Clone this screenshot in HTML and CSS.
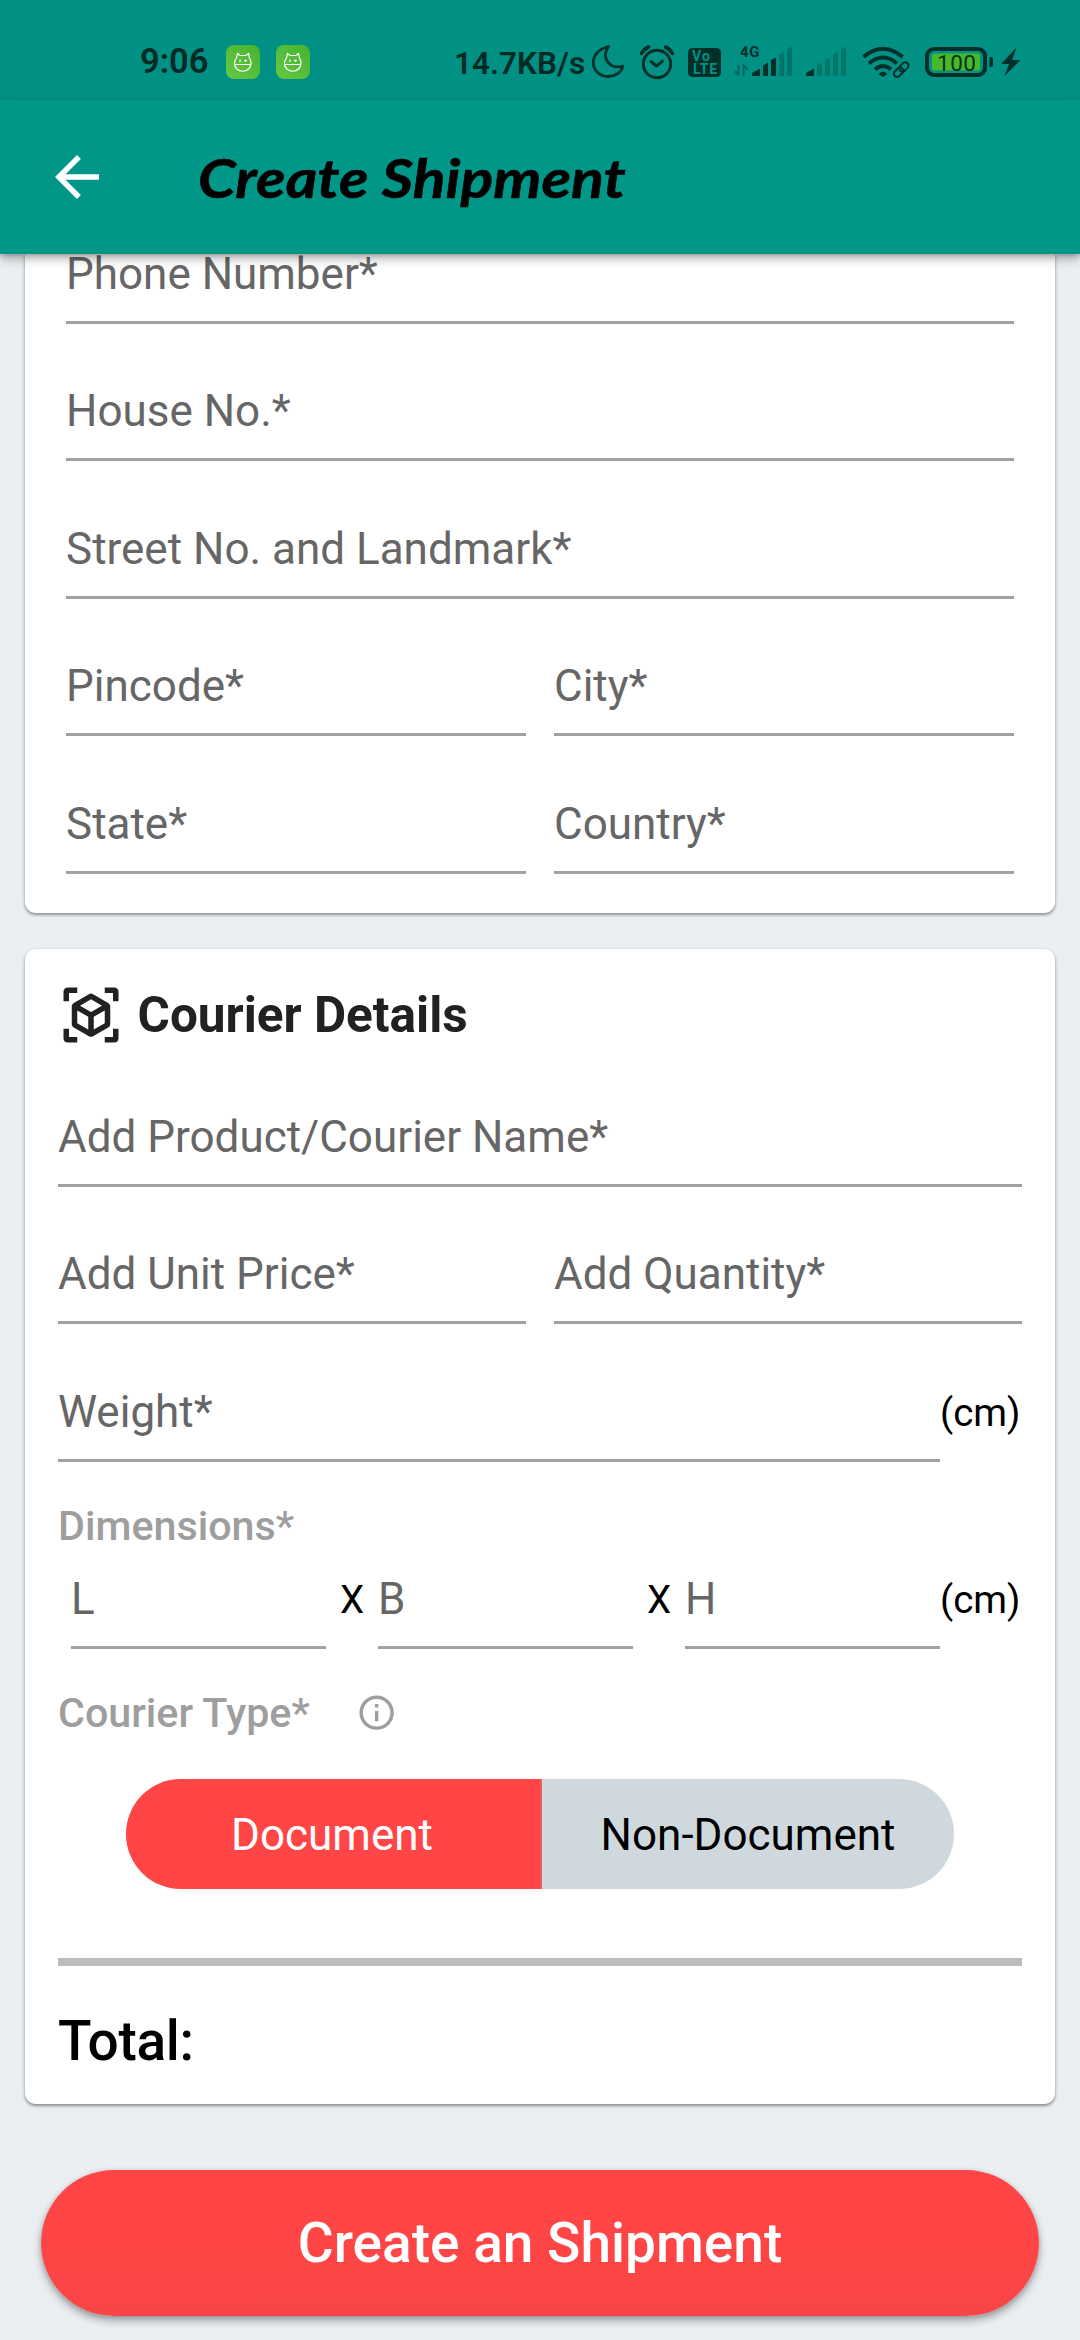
FILE: index.html
```html
<!DOCTYPE html>
<html lang="en">
<head>
<meta charset="utf-8">
<title>Create Shipment</title>
<link rel="stylesheet" href="styles.css">
</head>
<body>
<div class="status-bar">
  <span class="clock">9:06</span>
  <svg class="notif" viewBox="0 0 34 34"><use href="#cat"/></svg>
  <svg class="notif" viewBox="0 0 34 34"><use href="#cat"/></svg>
  <span class="speed">14.7KB/s</span>
  <svg class="sys" width="46" height="100" viewBox="588 0 46 100" fill="none" stroke="#003029" stroke-width="2.8" stroke-linejoin="round"><path d="M608.5 46.5C598 49 593.300 56 593.300 62.500C593.300 70.500 600 76.500 608 76.500C615.500 76.500 621.500 72.500 622.800 66C610 70 600.500 58 608.500 46.500Z"/></svg>
  <svg class="sys" width="48" height="100" viewBox="634 0 48 100" fill="none" stroke="#003029" stroke-width="3" stroke-linecap="round" stroke-linejoin="round"><circle cx="657" cy="64" r="13.700"/><path d="M651 61.500L656.500 66L662.500 61.200"/><path stroke-width="3.600" d="M641.500 53.500Q644 49 648.500 47M665.500 47Q670 49 672.500 53.500"/></svg>
  <svg class="sys" width="48" height="100" viewBox="682 0 48 100"><rect x="688" y="48" width="33" height="29" rx="4.500" fill="#003029"/><g fill="#009184" font-family="Roboto, sans-serif" font-weight="700"><text x="692" y="61" font-size="14" textLength="18">Vo</text><text x="693" y="73.500" font-size="14" textLength="24">LTE</text></g></svg>
  <svg class="sys" width="70" height="100" viewBox="730 0 70 100"><text x="740" y="57" font-family="Roboto, sans-serif" font-size="15" font-weight="700" fill="#003029" textLength="19.500">4G</text><path d="M738.500 65V75M739 75.500L735 71M743.500 76V65.500L748 70" stroke="#00665b" stroke-width="2" fill="none"/><g fill="#003029"><path d="M752 76V73L760 68.500V76Z"/><path d="M763 76V65.500L768 62.500V76Z"/><path d="M771 76V60L776 57.500V76Z"/></g><g fill="#00766a"><path d="M779 76V54.500L784 51.500V76Z"/><path d="M787 76V49.500L792 46.500V76Z"/></g></svg>
  <svg class="sys" width="56" height="100" viewBox="800 0 56 100"><path d="M806 76V73L814 68.500V76Z" fill="#003029"/><g fill="#00766a"><path d="M817 76V65.500L822 62.500V76Z"/><path d="M825 76V60L830 57.500V76Z"/><path d="M833 76V54.500L838 51.500V76Z"/><path d="M841 76V49.500L846 46.500V76Z"/></g></svg>
  <svg class="sys" width="62" height="100" viewBox="856 0 62 100" fill="none" stroke="#003029" stroke-width="4"><path d="M863.500 57Q883 40.500 902.500 57M869 63.500Q883 51.500 897 63.500M875 69.500Q883 62.500 891 69.500"/><path d="M878.500 74Q883 69 887.500 74L883 77Z" fill="#003029" stroke="none"/><g stroke-width="2" transform="rotate(-45 901 69.500)"><rect x="892" y="66.500" width="10.500" height="6.500" rx="3.200"/><rect x="899.500" y="66.500" width="10.500" height="6.500" rx="3.200"/></g></svg>
  <svg class="sys" width="76" height="100" viewBox="918 0 76 100"><rect x="927" y="49" width="58" height="26" rx="7" fill="none" stroke="#003029" stroke-width="4"/><rect x="932" y="53.500" width="48" height="17" rx="2.500" fill="#45b82c"/><path d="M989.500 57h1.500a2 2 0 0 1 2 2v6a2 2 0 0 1-2 2h-1.500z" fill="#003029"/><text x="937" y="70.800" font-family="Roboto, sans-serif" font-size="22.500" fill="#06301a" textLength="39">100</text></svg>
  <svg class="sys" width="36" height="100" viewBox="994 0 36 100"><path d="M1016.500 47.500L1001 64H1009L1004.500 76L1020.500 60H1012Z" fill="#003029"/></svg>
</div>

<header class="app-bar">
  <svg class="back" viewBox="0 0 24 24"><path fill="#fff" d="M20 11H7.830l5.590-5.590L12 4l-8 8 8 8 1.410-1.410L7.830 13H20v-2z"/></svg>
  <h1 class="title">Create Shipment</h1>
</header>

<main class="content">
  <section class="card card-address">
    <div class="field field-clipped">Phone Number*</div>
    <div class="field">House No.*</div>
    <div class="field">Street No. and Landmark*</div>
    <div class="pair"><div class="field">Pincode*</div><div class="field">City*</div></div>
    <div class="pair"><div class="field">State*</div><div class="field">Country*</div></div>
  </section>

  <section class="card card-courier">
    <h2 class="section-head">
      <svg class="section-icon" viewBox="0 0 24 24"><path fill="#212121" d="M18.250 7.600l-5.500-3.180c-.46-.27-1.040-.27-1.500 0L5.750 7.600C5.290 7.870 5 8.360 5 8.900v6.350c0 .54.29 1.030.75 1.300l5.500 3.180c.46.27 1.040.27 1.500 0l5.500-3.180c.46-.27.75-.76.75-1.300V8.900C19 8.360 18.710 7.870 18.250 7.600zM7 14.960v-4.620l4 2.320v4.610L7 14.960zM12 10.930L8 8.610l4-2.310 4 2.310L12 10.930zM13 17.270v-4.610l4-2.320v4.620L13 17.270zM7 2H3.500C2.670 2 2 2.670 2 3.500V7h2V4h3V2zM17 2h3.500C21.330 2 22 2.670 22 3.500V7h-2V4h-3V2zM7 22H3.500C2.670 22 2 21.330 2 20.500V17h2v3h3V22zM17 22h3.500c.83 0 1.500-.67 1.500-1.500V17h-2v3h-3V22z"/></svg>
      <span>Courier Details</span>
    </h2>
    <div class="field">Add Product/Courier Name*</div>
    <div class="pair"><div class="field">Add Unit Price*</div><div class="field">Add Quantity*</div></div>
    <div class="measure"><div class="field">Weight*</div><span class="unit">(cm)</span></div>
    <div class="label label-dimensions">Dimensions*</div>
    <div class="measure dimensions">
      <div class="field">L</div><span class="times">X</span>
      <div class="field">B</div><span class="times">X</span>
      <div class="field">H</div><span class="unit">(cm)</span>
    </div>
    <div class="label label-type">
      <span>Courier Type*</span>
      <svg class="info" viewBox="0 0 24 24"><path fill="#9e9e9e" d="M11 7h2v2h-2zm0 4h2v6h-2zm1-9C6.480 2 2 6.480 2 12s4.480 10 10 10 10-4.480 10-10S17.520 2 12 2zm0 18c-4.410 0-8-3.590-8-8s3.590-8 8-8 8 3.590 8 8-3.590 8-8 8z"/></svg>
    </div>
    <div class="toggle">
      <div class="option option-on">Document</div>
      <div class="option">Non-Document</div>
    </div>
    <div class="rule"></div>
    <div class="total">Total:</div>
  </section>

  <button class="submit">Create an Shipment</button>
</main>

<svg width="0" height="0" class="defs">
  <defs>
    <linearGradient id="leaf" x1="0" y1="1" x2="1" y2="0"><stop offset="0" stop-color="#66c846"/><stop offset="1" stop-color="#45b32f"/></linearGradient>
    <g id="cat">
      <rect width="34" height="34" rx="8" fill="url(#leaf)"/>
      <path d="M10.500 13L11.500 8.500L14 10.500H20L22.500 8.500L23.500 13M10.500 13Q8.500 15.500 8.500 18.500A8 7.500 0 0 0 25 18.500Q25 15.500 23.500 13M8.500 19.500H25M14 14.500V17M18 15.500H21M19.500 14.500V17" fill="none" stroke="#fff" stroke-width="1.200"/>
    </g>
  </defs>
</svg>
</body>
</html>
```
FILE: styles.css
```css
* {
  box-sizing: border-box;
}

body {
  margin: 0;
  width: 1080px;
  height: 2340px;
  overflow: hidden;
  background: #ebeff2;
  font-family: Roboto, "Noto Sans", sans-serif;
  color: #000;
}

h1, h2 {
  margin: 0;
}

.defs {
  display: block;
}

/* Status bar */
.status-bar {
  display: flex;
  align-items: center;
  height: 100px;
  background: #009184;
  color: #002a24;
}

.clock {
  width: 86px;
  margin-left: 140px;
  padding-top: 25px;
  font-size: 34.500px;
  font-weight: 600;
  line-height: 40px;
  height: 65px;
  margin-bottom: 3px;
  white-space: nowrap;
}

.notif {
  flex: none;
  width: 34px;
  height: 34px;
  margin: 24px 16px 0 0;
}

.speed {
  width: 134px;
  margin-left: 128px;
  padding-top: 27px;
  font-size: 31.500px;
  font-weight: 600;
  line-height: 40px;
  white-space: nowrap;
}

.sys {
  flex: none;
  display: block;
}

/* App bar */
.app-bar {
  position: relative;
  z-index: 1;
  display: flex;
  align-items: center;
  gap: 88px;
  height: 154px;
  padding: 0 44px;
  background: #009688;
  box-shadow: 0 5px 10px rgba(0, 0, 0, 0.28), 0 2px 4px rgba(0, 0, 0, 0.16);
}

.back {
  width: 66px;
  height: 66px;
}

.title {
  padding-top: 2px;
  font-family: Lato, sans-serif;
  font-size: 54px;
  font-style: italic;
  font-weight: 700;
  line-height: 66px;
  white-space: nowrap;
  -webkit-text-stroke: 0.6px #000;
  transform: scaleX(1.125);
  transform-origin: left;
}

/* Cards */
.content {
  display: flex;
  flex-direction: column;
  padding: 0 25px;
}

.card {
  background: #fff;
  border-radius: 11px;
  box-shadow: 0 2px 3px rgba(0, 0, 0, 0.32), 0 1px 4px rgba(0, 0, 0, 0.16);
}

.card-address {
  padding: 0 41px 39px;
  border-radius: 0 0 11px 11px;
}

.card-courier {
  height: 1155px;
  margin-top: 36px;
  padding: 33px 33px 0;
}

.section-head {
  display: flex;
  align-items: center;
  gap: 13.500px;
  height: 66px;
  margin-bottom: 1.500px;
  color: #212121;
  font-size: 49.500px;
  font-weight: 700;
}

.section-icon {
  width: 66px;
  height: 66px;
}

/* Underlined inputs */
.field {
  display: flex;
  flex: 1;
  align-items: flex-end;
  height: 137.500px;
  padding-bottom: 21px;
  border-bottom: 3px solid #a1a1a1;
  color: #666;
  font-size: 44px;
  line-height: 52px;
  white-space: nowrap;
}

.field-clipped {
  height: 69.500px;
}

.pair {
  display: flex;
  gap: 28px;
}

.measure {
  display: flex;
  align-items: flex-end;
}

.unit,
.times {
  font-size: 38.500px;
  line-height: 46px;
  padding-bottom: 26px;
}

.unit {
  width: 82px;
}

.times {
  width: 52px;
  text-align: center;
}

.dimensions {
  padding-left: 13px;
}

.dimensions .field {
  height: 99px;
}

.label {
  display: flex;
  align-items: center;
  height: 48px;
  color: #9e9e9e;
  font-size: 41.250px;
  font-weight: 500;
  line-height: 48px;
}

.label-dimensions {
  margin-top: 40px;
}

.label-type {
  margin-top: 40.500px;
  gap: 46px;
}

.info {
  width: 41.250px;
  height: 41.250px;
}

/* Courier type switch */
.toggle {
  display: flex;
  height: 110px;
  margin: 42px 68px 0;
  overflow: hidden;
  border-radius: 55px;
  background: #cfd8dd;
}

.option {
  display: flex;
  flex: 1;
  align-items: center;
  justify-content: center;
  padding: 1px 0 0;
  font-size: 44px;
}

.option-on {
  flex: 0 0 416px;
  padding-right: 2px;
  border-right: 2px solid #e85c5c;
  background: #ff4545;
  color: #fff;
}

.rule {
  height: 8.500px;
  margin-top: 68.500px;
  background: #bdbdbd;
}

.total {
  margin-top: 43px;
  font-size: 55px;
  font-weight: 500;
  line-height: 64px;
  letter-spacing: -0.3px;
}

.submit {
  height: 146px;
  margin: 66px 16px 0;
  padding: 0;
  border: 0;
  border-radius: 73px;
  background: linear-gradient(#ff4545 50%, #f94547);
  box-shadow: 0 5px 8px rgba(0, 0, 0, 0.3), 0 1px 5px rgba(0, 0, 0, 0.14);
  color: #fff;
  font-family: inherit;
  font-size: 55px;
  font-weight: 500;
}
```
